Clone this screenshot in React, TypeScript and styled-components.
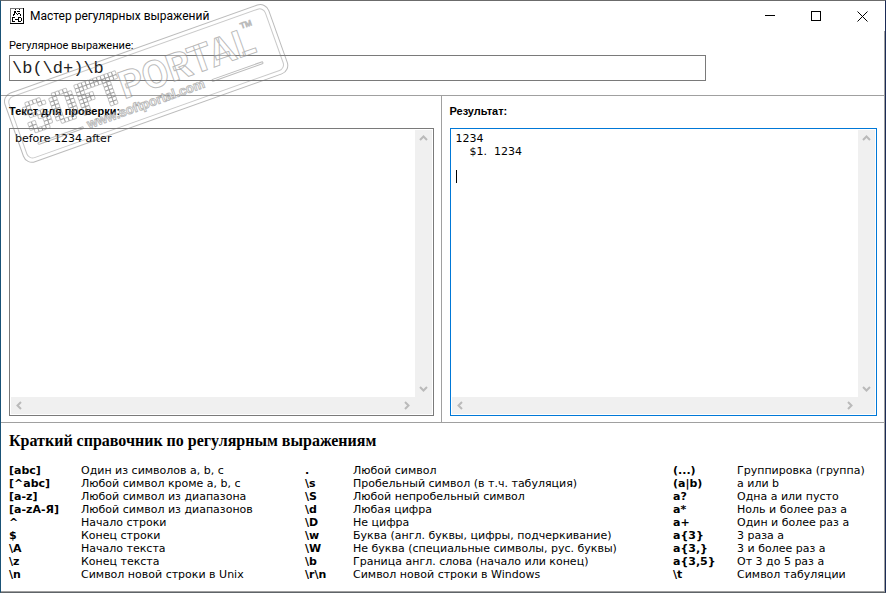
import React from "react";
import styled, { createGlobalStyle } from "styled-components";

const Global = createGlobalStyle`
  * { box-sizing: border-box; }
  body {
    margin: 0;
    background: #fff;
    color: #000;
    font: 11px/13px "DejaVu Sans", Verdana, sans-serif;
  }
`;

const Frame = styled.div`
  display: flex;
  flex-direction: column;
  min-height: 100vh;
  position: relative;
  border: 1px solid;
  border-color: #6b6b6b #1b2b57 #5f6468 #1a5276;
`;

const TitleBar = styled.header`
  display: flex;
  align-items: center;
  height: 30px;
  padding-left: 8px;
`;

const Title = styled.h1`
  flex: 1;
  margin: 0;
  padding-left: 6px;
  font: 400 12px/16px Roboto, "Noto Sans", sans-serif;
`;

const WindowButton = styled.button`
  display: flex;
  align-items: center;
  justify-content: center;
  width: 46px;
  height: 30px;
  padding: 0;
  border: 0;
  background: none;
`;

const Client = styled.main`
  display: flex;
  flex: 1;
  flex-direction: column;
  border-right: 1px solid #a0a0a0;
  border-bottom: 1px solid #a0a0a0;
`;

const ExpressionForm = styled.form`
  display: flex;
  flex-direction: column;
  gap: 2px;
  padding: 8px 178px 14px 8px;
  border-bottom: 1px solid #a0a0a0;
`;

const FieldLabel = styled.label<{ $bold?: boolean }>`
  font: ${(p) => (p.$bold ? '700 11px/14px "Liberation Sans"' : "400 11px/14px Roboto")}, sans-serif;
`;

const ExpressionInput = styled.input`
  width: 100%;
  height: 26px;
  padding: 0 2px;
  border: 1px solid #7a7a7a;
  border-radius: 0;
  outline: 0;
  background: #fff;
  color: #222;
  font: 17px/24px "Liberation Mono", "Courier New", monospace;
`;

const Panes = styled.div`
  display: grid;
  grid-template-columns: calc(50% - 2px) 1fr;
  flex: 1;
  border-bottom: 1px solid #a0a0a0;
`;

const Pane = styled.section`
  display: flex;
  flex-direction: column;
  gap: 10px;
  min-width: 0;
  padding: 8px 7px 6px 8px;

  & + & {
    border-left: 1px solid #a0a0a0;
  }
`;

const Memo = styled.div<{ $active?: boolean }>`
  position: relative;
  display: grid;
  grid-template: 1fr 17px / 1fr 17px;
  flex: 1;
  padding: 1px;
  border: 1px solid ${(p) => (p.$active ? "#0078d7" : "#7a7a7a")};
`;

const MemoText = styled.textarea`
  width: 100%;
  height: 100%;
  padding: 2px 4px;
  border: 0;
  outline: 0;
  resize: none;
  overflow: hidden;
  background: #fff;
  color: #000;
  font: 11px/13px "DejaVu Sans", Verdana, sans-serif;
`;

const ScrollTrack = styled.div<{ $vertical?: boolean }>`
  display: flex;
  flex-direction: ${(p) => (p.$vertical ? "column" : "row")};
  justify-content: space-between;
  background: #f0f0f0;
`;

const ScrollButton = styled.button`
  display: flex;
  align-items: center;
  justify-content: center;
  width: 17px;
  height: 17px;
  padding: 0;
  border: 0;
  background: none;
`;

const Corner = styled.div`
  background: #f0f0f0;
`;

const Caret = styled.span`
  position: absolute;
  left: 5px;
  top: 41px;
  width: 1px;
  height: 13px;
  background: #000;
`;

const Reference = styled.section`
  display: flex;
  flex-direction: column;
  gap: 14px;
  padding: 9px 8px 10px;
`;

const ReferenceTitle = styled.h2`
  margin: 0;
  font: 700 16px/18px "Liberation Serif", "Times New Roman", serif;
`;

const ReferenceTable = styled.table`
  width: 100%;
  border-collapse: collapse;
  table-layout: fixed;

  th, td {
    padding: 0;
    height: 13px;
    line-height: 13px;
    text-align: left;
    white-space: nowrap;
  }
`;

const Col = styled.col<{ $width?: number }>`
  width: ${(p) => (p.$width ? `${p.$width}px` : "auto")};
`;

const Stamp = styled.svg`
  position: absolute;
  left: -1px;
  top: -1px;
  pointer-events: none;
`;

const chevrons = {
  up: "M1 6 4.500 2.500 8 6",
  down: "M1 3 4.500 6.500 8 3",
  left: "M6 1 2.500 4.500 6 8",
  right: "M3 1 6.500 4.500 3 8",
};

function Arrow({ dir, label }: { dir: keyof typeof chevrons; label: string }) {
  return (
    <ScrollButton type="button" aria-label={label}>
      <svg width="9" height="9" viewBox="0 0 9 9" fill="none" stroke="#bababa" strokeWidth="2">
        <path d={chevrons[dir]} />
      </svg>
    </ScrollButton>
  );
}

function TextPane(props: { id: string; label: string; text: string; active?: boolean }) {
  return (
    <Pane>
      <FieldLabel $bold htmlFor={props.id}>{props.label}</FieldLabel>
      <Memo $active={props.active}>
        <MemoText id={props.id} defaultValue={props.text} readOnly={props.active} wrap="off" spellCheck={false} />
        <ScrollTrack $vertical>
          <Arrow dir="up" label="Вверх" />
          <Arrow dir="down" label="Вниз" />
        </ScrollTrack>
        <ScrollTrack>
          <Arrow dir="left" label="Влево" />
          <Arrow dir="right" label="Вправо" />
        </ScrollTrack>
        <Corner />
        {props.active && <Caret />}
      </Memo>
    </Pane>
  );
}

const rows = [
  ["[abc]", "Один из символов a, b, c", ".", "Любой символ", "(...)", "Группировка (группа)"],
  ["[^abc]", "Любой символ кроме a, b, c", "\\s", "Пробельный символ (в т.ч. табуляция)", "(a|b)", "a или b"],
  ["[a-z]", "Любой символ из диапазона", "\\S", "Любой непробельный символ", "a?", "Одна а или пусто"],
  ["[a-zА-Я]", "Любой символ из диапазонов", "\\d", "Любая цифра", "a*", "Ноль и более раз а"],
  ["^", "Начало строки", "\\D", "Не цифра", "a+", "Один и более раз а"],
  ["$", "Конец строки", "\\w", "Буква (англ. буквы, цифры, подчеркивание)", "a{3}", "3 раза а"],
  ["\\A", "Начало текста", "\\W", "Не буква (специальные символы, рус. буквы)", "a{3,}", "3 и более раз а"],
  ["\\z", "Конец текста", "\\b", "Граница англ. слова (начало или конец)", "a{3,5}", "От 3 до 5 раз а"],
  ["\\n", "Символ новой строки в Unix", "\\r\\n", "Символ новой строки в Windows", "\\t", "Символ табуляции"],
];

// Tile mosaic on the left half of the stamp.
const tiles = [
  ".####...####..###########",
  "##..##.##..##.###########",
  "##.....##..##.##.....##..",
  ".####..##..##.####...##..",
  "...###.##..##.####...##..",
  "##..##.##..##.##.....##..",
  "##..##.##..##.##.....##..",
  ".####...####..##.....##..",
];

function Mosaic() {
  return (
    <g fill="none" strokeOpacity=".45">
      {tiles.flatMap((line, y) =>
        [...line].map((c, x) =>
          c === "#" ? <rect key={`${x}-${y}`} x={15 + x * 4} y={14 + y * 4} width="4" height="4" rx="1" /> : null,
        ),
      )}
    </g>
  );
}

function PortalStamp() {
  return (
    <Stamp width="290" height="168" viewBox="0 0 290 168" aria-hidden="true">
      <g transform="translate(2 96) rotate(-19.600)" fill="none" stroke="#777" strokeOpacity=".5" strokeWidth="1">
        <rect x="0" y="0" width="280" height="73" rx="9" />
        <rect x="4" y="4" width="272" height="65" rx="6" strokeOpacity=".4" />
        <Mosaic />
        <text x="114" y="44" fontFamily="Roboto, sans-serif" fontWeight="700" fontSize="38" fill="#fff" fillOpacity=".35">PORTAL</text>
        <text x="71" y="60" fontFamily="Liberation Sans, sans-serif" fontWeight="700" fontSize="13" fill="#fff" fillOpacity=".6">www.softportal.com</text>
        <text x="248" y="17" fontFamily="Liberation Sans, sans-serif" fontSize="8">TM</text>
        <rect x="18" y="56" width="48" height="2" rx="1" />
        <rect x="203" y="55" width="54" height="2" rx="1" />
      </g>
    </Stamp>
  );
}

function AppIcon() {
  return (
    <svg width="15" height="16" viewBox="0 0 15 16" shapeRendering="crispEdges" aria-hidden="true">
      <path d="M1 0h14v16H1z" fill="#777" />
      <path d="M2 1h12v14H2z" fill="#fff" />
      <path d="M14 0h1v16H1v-1h13z" fill="#000" />
      <path
        d="M6 1h1v1H6zM10 1h1v1h-1zM5 3h2v2H5zM8 3h3v1H8zM5 5h1v2H5zM7 5h1v1H7zM9 5h2v1H9zM4 6h1v2H4zM8 6h1v1H8zM11 6h1v2h-1zM3 9h3v1H3zM3 10h1v3H3zM3 13h3v1H3zM6 11h3v1H6zM9 9h3v1H9zM9 10h1v3H9zM12 10h1v3h-1zM9 13h3v1H9z"
        fill="#000"
      />
    </svg>
  );
}

export default function App() {
  return (
    <>
      <Global />
      <Frame>
        <TitleBar>
          <AppIcon />
          <Title>Мастер регулярных выражений</Title>
          <WindowButton type="button" aria-label="Свернуть">
            <svg width="12" height="12" shapeRendering="crispEdges"><path d="M1 5h10v1H1z" /></svg>
          </WindowButton>
          <WindowButton type="button" aria-label="Развернуть">
            <svg width="10" height="10" shapeRendering="crispEdges"><path d="M0 0h10v10H0zM1 1v8h8V1z" fillRule="evenodd" /></svg>
          </WindowButton>
          <WindowButton type="button" aria-label="Закрыть">
            <svg width="11" height="11" viewBox="0 0 11 11" stroke="#000"><path d="M.5.5l10 10M10.500.5l-10 10" /></svg>
          </WindowButton>
        </TitleBar>
        <Client>
          <ExpressionForm onSubmit={(e: React.FormEvent) => e.preventDefault()}>
            <FieldLabel htmlFor="expression">Регулярное выражение:</FieldLabel>
            <ExpressionInput id="expression" defaultValue="\b(\d+)\b" spellCheck={false} />
          </ExpressionForm>
          <Panes>
            <TextPane id="source" label="Текст для проверки:" text="before 1234 after" />
            <TextPane id="result" label="Результат:" text={"1234\n    $1.  1234\n\n"} active />
          </Panes>
          <Reference>
            <ReferenceTitle>Краткий справочник по регулярным выражениям</ReferenceTitle>
            <ReferenceTable>
              <colgroup>
                <Col $width={72} />
                <Col $width={224} />
                <Col $width={48} />
                <Col $width={320} />
                <Col $width={64} />
                <Col />
              </colgroup>
              <tbody>
                {rows.map((row) => (
                  <tr key={row[0]}>
                    {row.map((cell, i) => (i % 2 ? <td key={i}>{cell}</td> : <th key={i} scope="row">{cell}</th>))}
                  </tr>
                ))}
              </tbody>
            </ReferenceTable>
          </Reference>
        </Client>
        <PortalStamp />
      </Frame>
    </>
  );
}
